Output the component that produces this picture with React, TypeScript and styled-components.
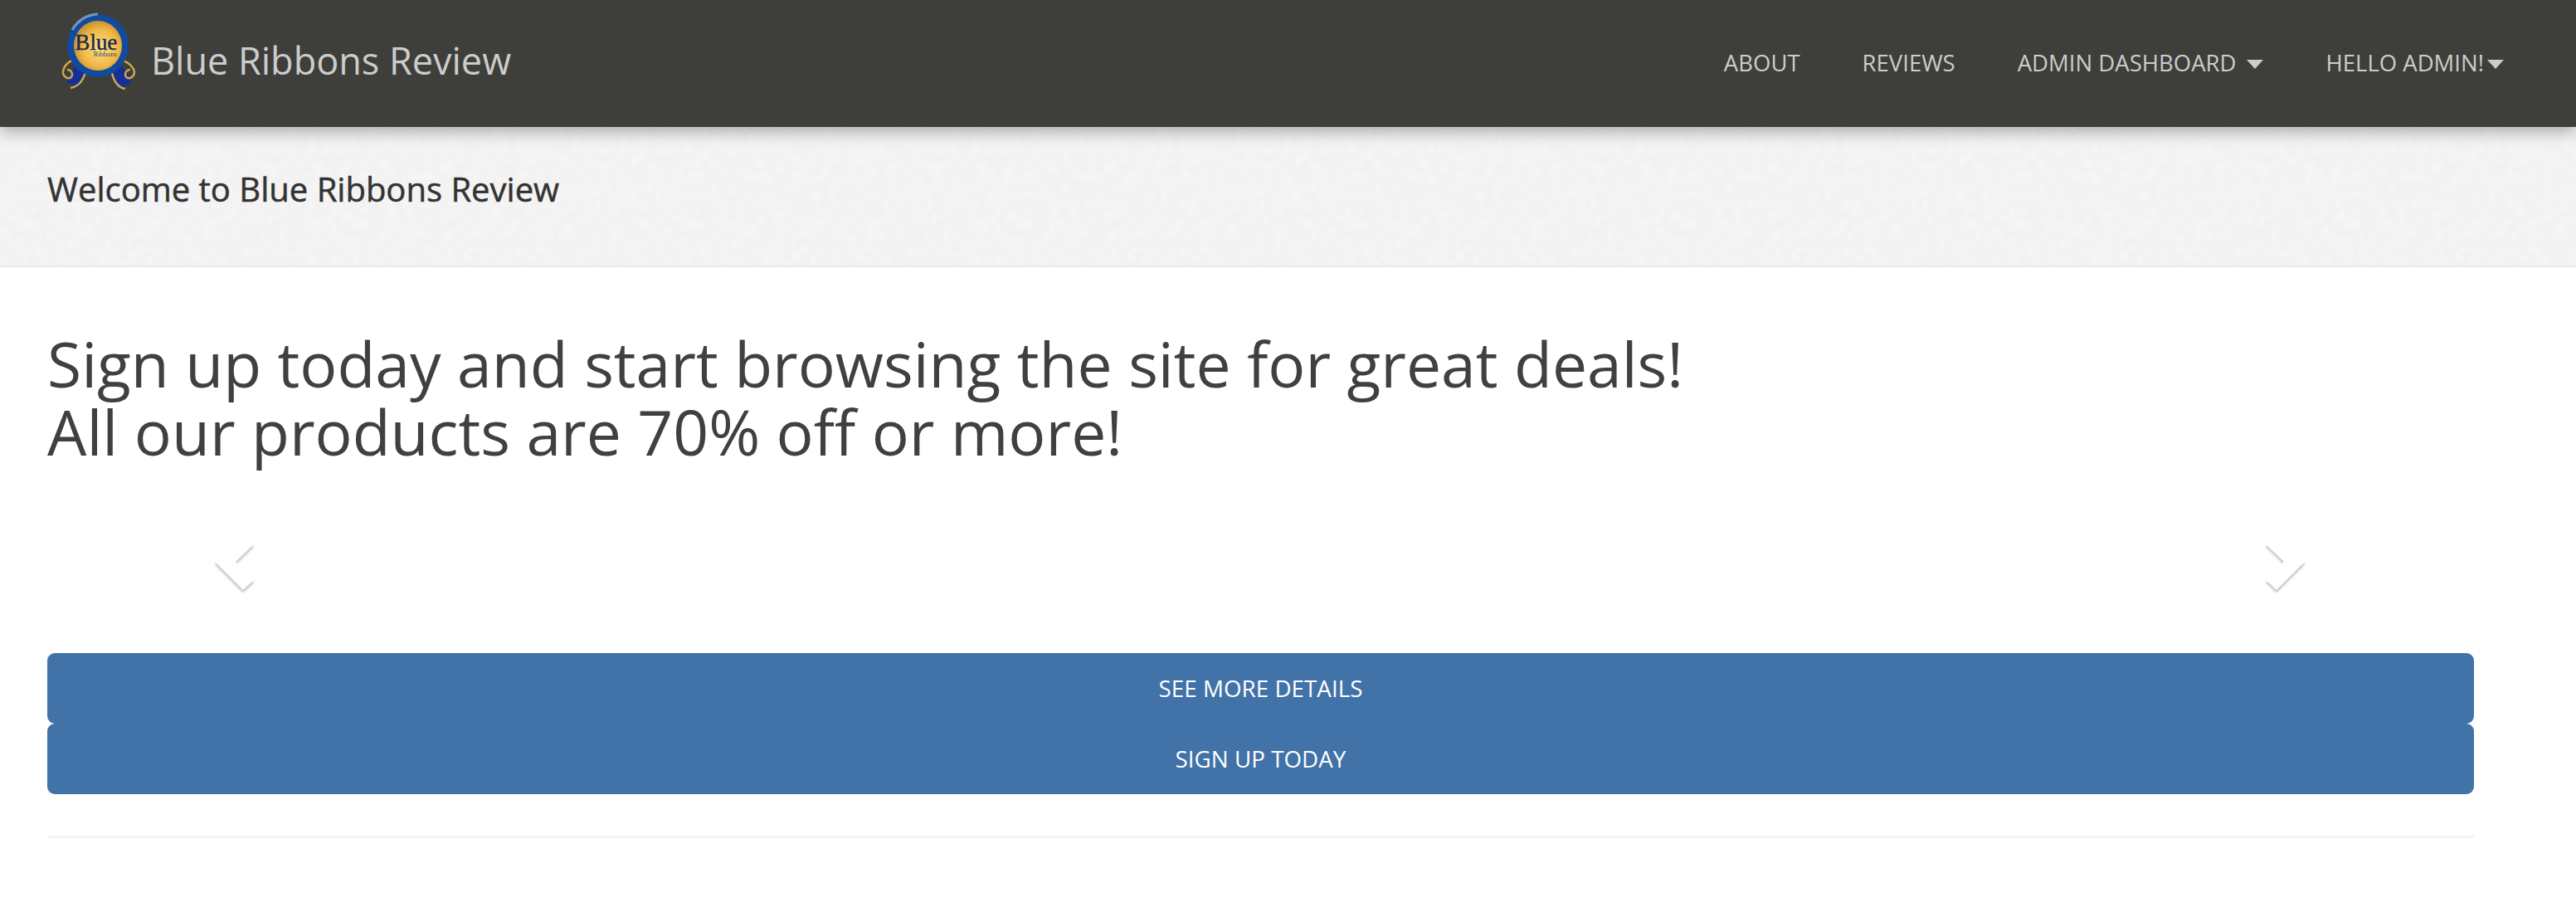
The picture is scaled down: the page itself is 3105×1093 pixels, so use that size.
import React from "react";
import styled, { createGlobalStyle } from "styled-components";

// faint paper grain for the title strip
const grain = encodeURIComponent(
  `<svg xmlns="http://www.w3.org/2000/svg" width="400" height="400"><filter id="n"><feTurbulence type="fractalNoise" baseFrequency="0.09" numOctaves="4" stitchTiles="stitch"/><feColorMatrix values="0 0 0 0 0.5 0 0 0 0 0.5 0 0 0 0 0.5 0.13 0 0 0 -0.04"/></filter><rect width="400" height="400" filter="url(#n)"/></svg>`
);

const GlobalStyle = createGlobalStyle`
  html, body {
    margin: 0;
    padding: 0;
    background: #fff;
    font-family: "Open Sans", "Liberation Sans", sans-serif;
  }
  * { box-sizing: border-box; }
`;

const TopBar = styled.header`
  position: relative;
  z-index: 2;
  display: flex;
  align-items: flex-start;
  justify-content: space-between;
  height: 153px;
  padding: 14px 87px 0 73px;
  background: #3e3e3a;
  box-shadow: 0 6px 18px rgba(0, 0, 0, 0.3);
`;

const Brand = styled.a`
  display: flex;
  align-items: flex-start;
  gap: 17px;
  color: #ccc;
  font-size: 45px;
  line-height: 60px;
  text-decoration: none;
`;

const BrandName = styled.span`
  margin-top: 29px;
`;

const Nav = styled.nav`
  display: flex;
  gap: 75px;
  padding-top: 43px;
`;

const NavItem = styled.a<{ $gap?: number }>`
  display: flex;
  align-items: center;
  gap: ${(p) => p.$gap ?? 0}px;
  color: #ccc;
  font-size: 27.5px;
  line-height: 38px;
  text-transform: uppercase;
  text-decoration: none;
`;

const Caret = styled.span`
  width: 0;
  height: 0;
  margin-top: 3px;
  border-left: 10px solid transparent;
  border-right: 10px solid transparent;
  border-top: 11px solid #ccc;
`;

const TitleBar = styled.div`
  height: 169px;
  padding: 48px 57px 0;
  background: #f5f5f5 url("data:image/svg+xml,${grain}");
  border-bottom: 2px solid #e8e8e8;
`;

const PageTitle = styled.h1`
  margin: 0;
  color: #333;
  font-size: 40px;
  font-weight: 400;
  line-height: 54px;
  -webkit-text-stroke: 0.5px #333;
`;

const Main = styled.main`
  width: 2982px;
  padding: 75px 0 0 57px;
`;

const Lead = styled.h2`
  margin: 0;
  color: #404040;
  font-size: 75px;
  font-weight: 400;
  line-height: 82px;
`;

const Carousel = styled.div`
  position: relative;
  height: 226px;
`;

const Arrow = styled.svg<{ $side: "left" | "right" }>`
  position: absolute;
  top: 83px;
  width: 48px;
  height: 70px;
  overflow: visible;
  filter: drop-shadow(0 3px 1.5px rgba(0, 0, 0, 0.25));
  ${(p) => (p.$side === "left" ? "left: 202px;" : "right: 204px;")}
`;

const ActionButton = styled.a`
  display: block;
  height: 85px;
  border-radius: 9px;
  background: #4172a8;
  color: #fff;
  font-size: 27.8px;
  line-height: 85px;
  text-align: center;
  text-transform: uppercase;
  text-decoration: none;
`;

const Rule = styled.hr`
  height: 3px;
  margin: 50px 0 0;
  border: 0;
  background: #f3f3f3;
`;

const Logo = () => (
  <svg width="92" height="94" viewBox="0 0 92 94" style={{ filter: "blur(0.6px)" }}>
    <defs>
      <radialGradient id="medal" cx="55%" cy="55%" r="62%">
        <stop offset="0%" stopColor="#fde08c" />
        <stop offset="60%" stopColor="#f0b945" />
        <stop offset="100%" stopColor="#b8842e" />
      </radialGradient>
    </defs>
    {/* ribbon tails */}
    <path d="M20 62 L32 72 L21 92 L7 84 Z" fill="#162f96" />
    <path d="M72 62 L60 72 L72 94 L86 84 Z" fill="#162f96" />
    <path d="M16 58 C4 62 -2 76 8 80 C16 82 16 70 8 70 M30 74 C26 84 22 90 12 92" fill="none" stroke="#cba84f" strokeWidth="2.5" />
    <path d="M72 58 C88 62 94 76 84 80 C76 82 76 70 84 70 M62 74 C64 84 70 92 78 93" fill="none" stroke="#cba84f" strokeWidth="2.5" />
    {/* medal */}
    <ellipse cx="45" cy="41" rx="37" ry="38" fill="#124a9e" />
    <path d="M14 22 A37 38 0 0 1 45 3" fill="none" stroke="#9fb6d8" strokeWidth="3" opacity="0.7" />
    <ellipse cx="45" cy="41" rx="29" ry="30" fill="url(#medal)" />
    <text x="43" y="46" textAnchor="middle" fontFamily="'Liberation Serif', serif" fontSize="27" fill="#1c2c50" stroke="#1c2c50" strokeWidth="0.5">
      Blue
    </text>
    <text x="54" y="54" textAnchor="middle" fontFamily="'Liberation Serif', serif" fontSize="8.5" fill="#3a4258">
      Ribbons
    </text>
  </svg>
);

export default function App() {
  return (
    <>
      <GlobalStyle />
      <TopBar>
        <Brand href="#">
          <Logo />
          <BrandName>Blue Ribbons Review</BrandName>
        </Brand>
        <Nav>
          <NavItem href="#">About</NavItem>
          <NavItem href="#">Reviews</NavItem>
          <NavItem href="#" $gap={13}>
            Admin Dashboard <Caret />
          </NavItem>
          <NavItem href="#" $gap={4}>
            Hello Admin! <Caret />
          </NavItem>
        </Nav>
      </TopBar>
      <TitleBar>
        <PageTitle>Welcome to Blue Ribbons Review</PageTitle>
      </TitleBar>
      <Main>
        <Lead>
          Sign up today and start browsing the site for great deals!
          <br />
          All our products are 70% off or more!
        </Lead>
        <Carousel>
          <Arrow $side="left" viewBox="0 0 48 70">
            <polygon points="0,33 34,0 47,12 25,33 47,55 34,67" fill="#fff" />
          </Arrow>
          <Arrow $side="right" viewBox="0 0 48 70">
            <polygon points="48,33 14,0 1,12 23,33 1,55 14,67" fill="#fff" />
          </Arrow>
        </Carousel>
        <ActionButton href="#">See more details</ActionButton>
        <ActionButton href="#">Sign up today</ActionButton>
        <Rule />
      </Main>
    </>
  );
}
